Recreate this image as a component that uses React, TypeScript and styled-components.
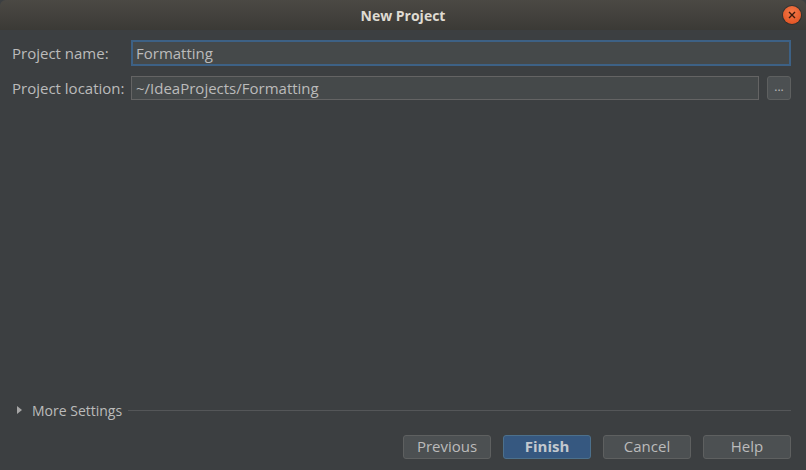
import React from "react";
import styled, { createGlobalStyle } from "styled-components";

const GlobalStyle = createGlobalStyle`
  html, body { margin: 0; padding: 0; background: #3c3f41; }
  body { font-family: "Open Sans", "Noto Sans", sans-serif; }
  * { box-sizing: border-box; }
`;

/* ── Window frame ── */
const Window = styled.div`
  width: 806px;
  height: 470px;
  display: flex;
  flex-direction: column;
  background: #3c3f41;
  color: #bbbbbb;
  font-size: 15px;
`;

const TitleBar = styled.div`
  height: 30px;
  flex-shrink: 0;
  position: relative;
  display: flex;
  align-items: center;
  justify-content: center;
  background: linear-gradient(#4b4944, #3b3a36);
  border-radius: 6px 6px 0 0;
`;

const Title = styled.h1`
  margin: 0;
  font-size: 14px;
  font-weight: 700;
  color: #dfdbd2;
`;

const CloseButton = styled.button`
  position: absolute;
  right: 5px;
  top: 6px;
  width: 18px;
  height: 18px;
  border-radius: 50%;
  border: none;
  padding: 0;
  display: flex;
  align-items: center;
  justify-content: center;
  background: radial-gradient(circle at 50% 35%, #f47a4a, #df4b1a);
  box-shadow: 0 0 0 1px rgba(0, 0, 0, 0.25);
`;

/* ── Form ── */
const Form = styled.div`
  display: grid;
  grid-template-columns: 111px 1fr 24px;
  column-gap: 8px;
  row-gap: 10px;
  align-items: center;
  padding: 10px 15px 0 12px;
`;

const Label = styled.label`
  font-size: 15px;
  color: #bbbbbb;
  white-space: nowrap;
`;

const Field = styled.input<{ $focused?: boolean; $wide?: boolean }>`
  grid-column: ${({ $wide }) => ($wide ? "2 / 4" : "2 / 3")};
  height: ${({ $focused }) => ($focused ? "26px" : "24px")};
  padding: 0 ${({ $focused }) => ($focused ? "3px" : "4px")} 1px;
  background: #45494a;
  color: #bbbbbb;
  font-family: inherit;
  font-size: 15px;
  outline: none;
  border: ${({ $focused }) => ($focused ? "2px solid #3d6185" : "1px solid #646464")};
  border-radius: 0;
`;

const BrowseButton = styled.button`
  height: 24px;
  width: 24px;
  padding: 0 0 6px;
  background: #4c5052;
  border: 1px solid #5e6060;
  border-radius: 3px;
  color: #bbbbbb;
  font-family: inherit;
  font-size: 12px;
  line-height: 1;
  display: flex;
  align-items: flex-end;
  justify-content: center;
`;

const Spacer = styled.div`
  flex: 1;
`;

/* ── More settings ── */
const MoreRow = styled.div`
  display: flex;
  align-items: center;
  gap: 6px;
  padding: 0 15px 0 17px;
  height: 16px;
`;

const Triangle = styled.span`
  width: 0;
  height: 0;
  border-top: 4px solid transparent;
  border-bottom: 4px solid transparent;
  border-left: 5px solid #a6a6a6;
  margin-right: 4px;
`;

const MoreText = styled.span`
  font-size: 14px;
  color: #bbbbbb;
`;

const Rule = styled.div`
  flex: 1;
  height: 1px;
  background: #545658;
`;

/* ── Footer ── */
const Footer = styled.div`
  display: flex;
  justify-content: flex-end;
  gap: 12px;
  padding: 17px 15px 11px;
`;

const DialogButton = styled.button<{ $primary?: boolean }>`
  width: 88px;
  height: 24px;
  border-radius: 3px;
  font-family: inherit;
  font-size: 15px;
  line-height: 1;
  font-weight: ${({ $primary }) => ($primary ? 700 : 400)};
  color: ${({ $primary }) => ($primary ? "#c3c8ce" : "#bbbbbb")};
  background: ${({ $primary }) => ($primary ? "#365880" : "#4c5052")};
  border: 1px solid ${({ $primary }) => ($primary ? "#4c708c" : "#5e6060")};
  padding: 0 0 1px;
`;

export default function App() {
  return (
    <>
      <GlobalStyle />
      <Window>
        <TitleBar>
          <Title>New Project</Title>
          <CloseButton aria-label="Close">
            <svg width="8" height="8" viewBox="0 0 8 8">
              <path d="M1 1L7 7M7 1L1 7" stroke="#3a1a0c" strokeWidth="1.4" />
            </svg>
          </CloseButton>
        </TitleBar>

        <Form>
          <Label>Project name:</Label>
          <Field $focused $wide defaultValue="Formatting" />
          <Label>Project location:</Label>
          <Field defaultValue="~/IdeaProjects/Formatting" />
          <BrowseButton>...</BrowseButton>
        </Form>

        <Spacer />

        <MoreRow>
          <Triangle />
          <MoreText>More Settings</MoreText>
          <Rule />
        </MoreRow>

        <Footer>
          <DialogButton>Previous</DialogButton>
          <DialogButton $primary>Finish</DialogButton>
          <DialogButton>Cancel</DialogButton>
          <DialogButton>Help</DialogButton>
        </Footer>
      </Window>
    </>
  );
}
